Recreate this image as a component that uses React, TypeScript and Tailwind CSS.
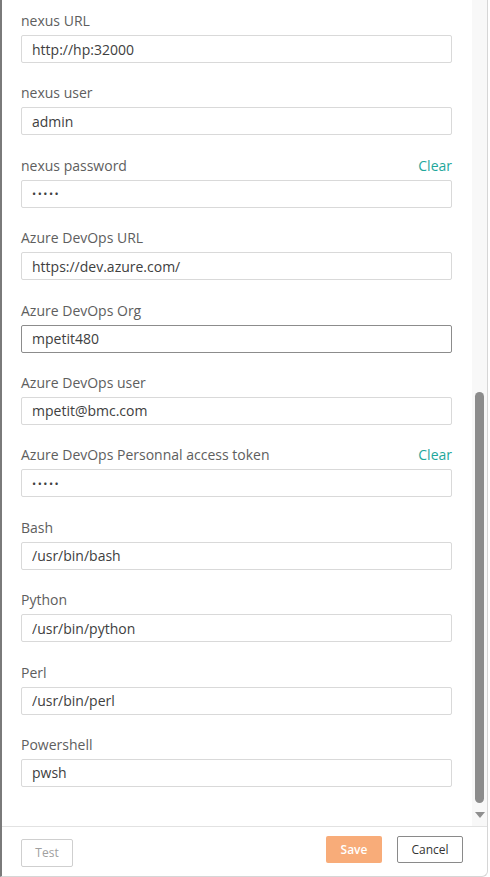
import React from "react";

type Field = {
  label: string;
  value: string;
  secret?: boolean;
  focused?: boolean;
};

const fields: Field[] = [
  { label: "nexus URL", value: "http://hp:32000" },
  { label: "nexus user", value: "admin" },
  { label: "nexus password", value: "•••••", secret: true },
  { label: "Azure DevOps URL", value: "https://dev.azure.com/" },
  { label: "Azure DevOps Org", value: "mpetit480", focused: true },
  { label: "Azure DevOps user", value: "mpetit@bmc.com" },
  { label: "Azure DevOps Personnal access token", value: "•••••", secret: true },
  { label: "Bash", value: "/usr/bin/bash" },
  { label: "Python", value: "/usr/bin/python" },
  { label: "Perl", value: "/usr/bin/perl" },
  { label: "Powershell", value: "pwsh" },
];

function FormField({ field }: { field: Field }) {
  return (
    <div className="flex flex-col">
      <div className="flex h-[20px] items-center justify-between leading-[20px]">
        <span className="text-[#5e5e5e]">{field.label}</span>
        {field.secret && <span className="text-[#1fa79b]">Clear</span>}
      </div>
      <input
        readOnly
        value={field.value}
        className={`mt-[4px] h-[28px] w-full rounded-[2px] border bg-white px-[10px] text-[#404040] outline-none ${
          field.focused ? "border-[#8c8c8c]" : "border-[#d9d9d9]"
        } ${field.secret ? "text-[11px] tracking-[1.5px]" : "text-[14px]"}`}
      />
    </div>
  );
}

export default function App() {
  return (
    <div className="h-[877px] w-[490px] bg-white" style={{ fontFamily: '"Open Sans", "Liberation Sans", sans-serif' }}>
      <div className="flex h-[877px] w-[488px] flex-col rounded-br-[6px] border-b border-l-2 border-r border-b-[#d6d6d6] border-l-[#7a7a7a] border-r-[#d6d6d6] text-[14px]">
        <div className="flex h-[826px] flex-row">
          <div className="flex flex-1 flex-col gap-[20.4px] pl-[19px] pr-[20px] pt-[11px]">
            {fields.map((f) => (
              <FormField key={f.label} field={f} />
            ))}
          </div>
          <div className="flex w-[15px] flex-col items-center bg-[#f8f8f8]">
            <div className="h-[392px]" />
            <div className="h-[411px] w-[9px] rounded-full bg-[#8c8c8c]" />
            <svg className="mt-[9px]" width="10" height="6" viewBox="0 0 10 6">
              <path d="M0 0 L10 0 L5 6 Z" fill="#8f8f8f" />
            </svg>
          </div>
        </div>
        <div className="flex flex-1 items-start justify-between border-t border-[#e2e2e2] pl-[19px] pr-[24px] pt-[9px]">
          <button className="mt-[3px] h-[28px] w-[52px] rounded-[2px] border border-[#cfcfcf] bg-white text-[12px] text-[#a0a0a0]">
            Test
          </button>
          <div className="flex gap-[15px]">
            <button className="h-[27px] w-[56px] rounded-[2px] bg-[#f8ac79] text-[12px] font-semibold text-white">
              Save
            </button>
            <button className="h-[27px] w-[66px] rounded-[2px] border border-[#8a8a8a] bg-white text-[12px] text-[#333]">
              Cancel
            </button>
          </div>
        </div>
      </div>
    </div>
  );
}
